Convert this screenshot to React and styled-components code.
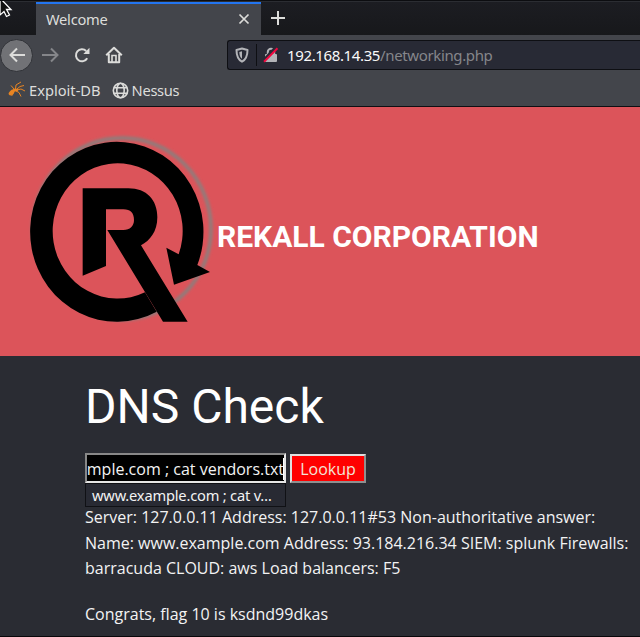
import React from "react";
import styled, { createGlobalStyle } from "styled-components";

const Global = createGlobalStyle`
  * { box-sizing: border-box; }
  html, body { margin: 0; padding: 0; background: #2a2c33; overflow: hidden; }
`;

const Window = styled.div`
  position: relative;
  width: 640px;
  height: 637px;
  display: flex;
  flex-direction: column;
  overflow: hidden;
  border-top: 1px solid #0c0d10;
  border-bottom: 1px solid #08070a;
  font-family: "Noto Sans", sans-serif;
  font-size: 14.67px;
  color: #dddddb;
  white-space: nowrap;
`;

const TabStrip = styled.div`
  display: flex;
  height: 34px;
  flex: none;
  padding-left: 36px;
  border-top: 1px solid #2b2d32;
  background: linear-gradient(#1c1d22, #17181b);
`;

const Tab = styled.div`
  display: flex;
  align-items: center;
  justify-content: space-between;
  width: 225px;
  padding: 0 11px 2px 10px;
  border-top: 2px solid #2375f0;
  background: #43454b;
  letter-spacing: -0.25px;
`;

const NewTab = styled.div`
  display: flex;
  align-items: center;
  padding: 0 0 1px 10px;
`;

const Toolbar = styled.div`
  display: flex;
  align-items: center;
  height: 40px;
  flex: none;
  background: #43454b;
`;

const BackButton = styled.div`
  display: flex;
  align-items: center;
  justify-content: center;
  width: 33px;
  height: 33px;
  border: 1px solid #303237;
  border-radius: 50%;
  background: #717276;
`;

const NavIcons = styled.div`
  display: flex;
  align-items: center;
  gap: 15px;
  width: 194px;
  padding-left: 8px;
`;

const AddressBar = styled.div`
  display: flex;
  align-items: center;
  flex: 1;
  height: 30px;
  border: 1px solid #0e0f13;
  border-right: 0;
  border-radius: 3px 0 0 3px;
  background: #282a35;
  padding-left: 6px;
  font-size: 15px;
  letter-spacing: -0.37px;
`;

const Divider = styled.div`
  width: 1px;
  height: 22px;
  margin: 0 6px 0 6px;
  background: #0e0f13;
`;

const Url = styled.span`
  margin-left: 8px;
  color: #fafafa;
`;

const Path = styled.span`
  color: #85868b;
`;

const Bookmarks = styled.div`
  display: flex;
  align-items: center;
  height: 32px;
  flex: none;
  padding: 0 0 1px 8px;
  border-bottom: 1px solid #0e0f13;
  background: #43454b;
`;

const Bookmark = styled.div`
  display: flex;
  align-items: center;
  gap: 3px;
  margin-right: 11px;
  letter-spacing: ${(p) => p.$tracking || 0}px;
`;

const Banner = styled.header`
  display: flex;
  align-items: center;
  height: 249px;
  flex: none;
  background: #dc545a;
`;

const LogoArt = styled.svg`
  flex: none;
  margin-bottom: 3px;
`;

const Company = styled.h1`
  margin: 10px 0 0 -23px;
  font: 700 30px/36px Roboto, sans-serif;
  color: #fff;
`;

const Content = styled.main`
  flex: 1;
  padding-left: 85px;
  background: #2a2c33;
  color: #f3f3f3;
  font-family: "Open Sans", sans-serif;
  font-size: 16px;
`;

const Heading = styled.h2`
  margin: 21px 0 0;
  font: 400 48px/60px Roboto, sans-serif;
  color: #fff;
`;

const Form = styled.form`
  position: relative;
  display: flex;
  align-items: flex-end;
  gap: 4px;
  height: 30px;
  margin-top: 16px;
`;

const Field = styled.div`
  display: flex;
  align-items: center;
  justify-content: flex-end;
  width: 201px;
  height: 30px;
  padding-top: 1px;
  overflow: hidden;
  border: 2px solid;
  border-color: #888 #e6e6e6 #e6e6e6 #888;
  background: #000;
  color: #f3f3f3;
`;

const Caret = styled.span`
  width: 1px;
  height: 22px;
  margin-left: -1px;
  flex: none;
  background: #fff;
`;

const Lookup = styled.button`
  width: 76px;
  height: 29px;
  padding: 0;
  border: 2px solid;
  border-color: #e0e0e0 #8f8f8f #8f8f8f #e0e0e0;
  background: #ff0000;
  color: #f3e4d8;
  font: 16px "Open Sans", sans-serif;
`;

const Suggestion = styled.div`
  position: absolute;
  top: 30px;
  left: 0;
  width: 201px;
  height: 24px;
  padding-left: 6px;
  border: 1px solid #101115;
  background: #282a33;
  font: 14.67px/23px "Noto Sans", sans-serif;
  letter-spacing: -0.2px;
`;

const Result = styled.p`
  margin: ${(p) => p.$top}px 0 0;
  line-height: 25.6px;
`;

const Pointer = styled.svg`
  position: absolute;
  left: 0;
  top: -1px;
`;

const Logo = () => (
  <LogoArt width="240" height="240" viewBox="0 0 720 720">
    <defs>
      <filter id="glow" x="-20%" y="-20%" width="140%" height="140%">
        <feGaussianBlur stdDeviation="5" />
      </filter>
    </defs>
    <ellipse cx="366" cy="356" rx="267" ry="272" fill="none" stroke="#87807f" strokeWidth="10" filter="url(#glow)" />
    <path d="M470 605A260 270 0 1 1 592 465L630 486L522 524L499 413L536 433A195 203 0 1 0 435 547Z" />
    <path d="M248 235H385C440 235 472 270 472 322C472 365 450 392 423 406L563 635H489L322 360H370C390 360 402 348 402 330C402 310 392 298 370 298H318V468L248 497Z" />
  </LogoArt>
);

const Line = ({ size, color = "#dcdcda", sw = 2, children, box = 16 }) => (
  <svg width={size} height={size} viewBox={`0 0 ${box} ${box}`} fill="none" stroke={color} strokeWidth={sw}>
    {children}
  </svg>
);

export default function App() {
  return (
    <>
      <Global />
      <Window>
        <TabStrip>
          <Tab>
            <span>Welcome</span>
            <Line size={12} box={12} sw={1.7}><path d="M1.5 1.5l9 9M10.5 1.5l-9 9" /></Line>
          </Tab>
          <NewTab>
            <Line size={14} box={14}><path d="M7 0v14M0 7h14" /></Line>
          </NewTab>
        </TabStrip>
        <Toolbar>
          <BackButton>
            <Line size={16}><path d="M16 8H1.5M8 1.5L1.5 8L8 14.5" /></Line>
          </BackButton>
          <NavIcons>
            <Line size={18} box={18} color="#85868a"><path d="M1 9h15M10 2.5L16.5 9L10 15.5" /></Line>
            <Line size={16}>
              <path d="M13.2 11.2A6 6 0 1 1 12.2 4" />
              <path d="M15.5.8V7H9.3z" fill="#dcdcda" stroke="none" />
            </Line>
            <Line size={18} box={18}>
              <path d="M1.2 9.3L9 1.8l7.8 7.5M3.8 8v8.2h10.4V8" strokeLinejoin="round" />
              <path d="M7 16V9.5h4V16" strokeWidth="1.6" />
            </Line>
          </NavIcons>
          <AddressBar>
            <Line size={16} color="#b3b4b8">
              <path d="M8 1.5L13.5 3c0 6-1.3 9.5-5.5 11.7C3.8 12.5 2.5 9 2.5 3z" strokeLinejoin="round" />
              <path d="M8 4.3v7.5C6.2 10.5 5.4 8.3 5.3 5z" fill="#b3b4b8" stroke="none" />
            </Line>
            <Divider />
            <Line size={16}>
              <path d="M4.800 8V5a3.200 3.200 0 0 1 6.400 0v3" stroke="#b3b4b8" />
              <rect x="2" y="7" width="12" height="8" rx="1" fill="#b3b4b8" stroke="none" />
              <path d="M.2 13.800L13 .2" stroke="#282a35" strokeWidth="3" />
              <path d="M1 14.800L14.500 1.200" stroke="#f0073f" strokeWidth="2" />
            </Line>
            <Url>192.168.14.35<Path>/networking.php</Path></Url>
          </AddressBar>
        </Toolbar>
        <Bookmarks>
          <Bookmark>
            <Line size={18} box={18} color="#e88422" sw={1}>
              <path d="M6 8L3 4.500M7.500 8L8 4L13 1M9 8l3-2.500L16 4.500M9 9l4-1 4 2M8 10l3 1.500 2 4M6 10l-1 3-1.500 2" />
              <ellipse cx="3.600" cy="11.500" rx="3.400" ry="2.100" transform="rotate(-42 3.600 11.500)" fill="#e88422" stroke="none" />
              <ellipse cx="7.500" cy="9" rx="2.800" ry="1.500" fill="#e88422" stroke="none" />
            </Line>
            <span>Exploit-DB</span>
          </Bookmark>
          <Bookmark $tracking={-0.3}>
            <Line size={17} box={17} sw={1.6}>
              <circle cx="8.500" cy="8.500" r="7.200" />
              <ellipse cx="8.500" cy="8.500" rx="3.700" ry="7.200" />
              <path d="M2 5.700h13M2 11.300h13" />
            </Line>
            <span>Nessus</span>
          </Bookmark>
        </Bookmarks>
        <Banner>
          <Logo />
          <Company>REKALL CORPORATION</Company>
        </Banner>
        <Content>
          <Heading>DNS Check</Heading>
          <Form>
            <Field><span>www.example.com ; cat vendors.txt</span><Caret /></Field>
            <Lookup type="button">Lookup</Lookup>
            <Suggestion>www.example.com ; cat v…</Suggestion>
          </Form>
          <Result $top={22}>
            Server: 127.0.0.11 Address: 127.0.0.11#53 Non-authoritative answer:<br />
            Name: www.example.com Address: 93.184.216.34 SIEM: splunk Firewalls:<br />
            barracuda CLOUD: aws Load balancers: F5
          </Result>
          <Result $top={20}>Congrats, flag 10 is ksdnd99dkas</Result>
        </Content>
        <Pointer width="14" height="19" viewBox="0 0 14 19">
          <path d="M0-2L11 9.500H6.500L9.500 15L6.500 16.500L4 11.500L0 15z" fill="#111" stroke="#fff" strokeWidth="1.300" />
        </Pointer>
      </Window>
    </>
  );
}
